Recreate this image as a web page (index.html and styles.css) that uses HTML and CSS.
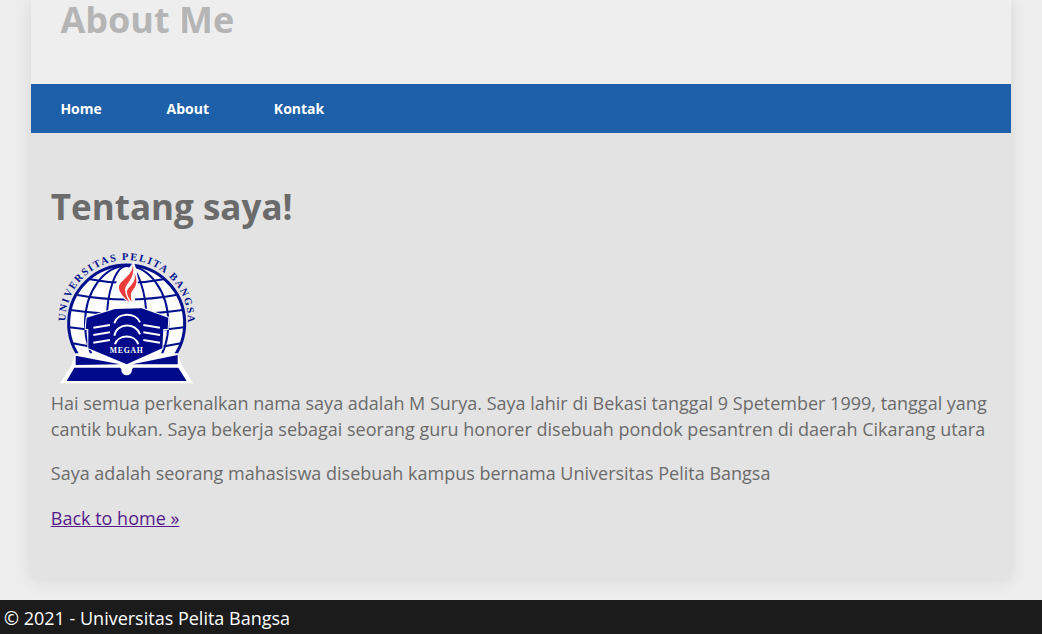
FILE: index.html
```html
<!DOCTYPE html>
<html lang="en">

    <head>
        <meta name="viewport" content="width=device-width, initial-scale=1">
        <title>About Me</title>
        <link rel="stylesheet" href="styles.css">
    </head>

    <body>
        <div class="wrapper">
            <header class="site-header">
                <h1>About Me</h1>
            </header>
            <nav class="site-nav">
                <a href="#">Home</a>
                <a href="#">About</a>
                <a href="#">Kontak</a>
            </nav>
            <main class="content">
                <h2>Tentang saya!</h2>
                <svg class="logo" viewBox="33 30 450 408" role="img" aria-label="Logo Universitas Pelita Bangsa">
                    <defs>
                        <path id="logo-arc" d="M76 244A184 184 0 0 1 444 244"></path>
                    </defs>
                    <text class="logo-ring"><textPath href="#logo-arc">UNIVERSITAS PELITA BANGSA</textPath></text>

                    <!-- globe -->
                    <circle class="globe-fill" cx="260" cy="250" r="172"></circle>
                    <g class="globe-lines">
                        <ellipse cx="260" cy="250" rx="125" ry="172"></ellipse>
                        <ellipse cx="260" cy="250" rx="60" ry="172"></ellipse>
                        <path d="M150 118Q260 140 370 118"></path>
                        <path d="M112 165Q260 192 408 165"></path>
                        <path d="M92 210Q260 235 428 210"></path>
                        <path d="M88 262Q260 285 432 262"></path>
                        <path d="M98 310Q260 345 422 310"></path>
                    </g>
                    <path class="globe-ring" d="M130 365A174 174 0 1 1 390 365"></path>

                    <!-- flame -->
                    <path class="flame-gap" d="M280 62C300 110 296 150 280 192C250 180 225 160 228 130C235 110 270 90 280 62Z"></path>
                    <path class="flame" d="M278 68C282 95 262 108 245 125C232 138 232 155 268 186C255 160 250 148 262 132C275 115 284 100 278 68Z"></path>
                    <path class="flame" d="M283 100C290 120 275 135 265 145C255 158 265 172 275 186C272 170 270 160 280 148C292 135 292 115 283 100Z"></path>

                    <!-- book under building -->
                    <path class="halo" d="M60 430L95 375L107 340L413 340L425 375L460 430Z"></path>
                    <path class="navy" d="M80 423L103 383L240 383L260 405L280 383L415 383L440 423Z"></path>
                    <path class="navy" d="M107 347L240 373L107 375Z"></path>
                    <path class="navy" d="M413 345L277 373L413 373Z"></path>
                    <circle class="page-dot" cx="260" cy="390" r="16"></circle>

                    <!-- building -->
                    <path class="navy building" d="M140 233L225 207L305 205L385 233L383 267L370 267L367 325L260 373L145 325L145 267L137 267Z"></path>
                    <g class="building-lines">
                        <path d="M223 250C232 216 288 216 300 247"></path>
                        <path d="M223 287C232 247 288 247 300 283"></path>
                        <path d="M225 313C234 282 286 282 295 313"></path>
                        <path d="M160 263L210 255"></path>
                        <path d="M160 285L210 277"></path>
                        <path d="M160 308L210 300"></path>
                        <path d="M310 255L360 263"></path>
                        <path d="M310 277L360 285"></path>
                        <path d="M310 300L360 308"></path>
                    </g>
                    <text class="logo-megah" x="260" y="340" text-anchor="middle">MEGAH</text>
                </svg>
                <p>Hai semua perkenalkan nama saya adalah M Surya. Saya lahir di Bekasi tanggal 9 Spetember 1999, tanggal yang cantik bukan. Saya bekerja sebagai seorang guru honorer disebuah pondok pesantren di daerah Cikarang utara</p>
                <p>Saya adalah seorang mahasiswa disebuah kampus bernama Universitas Pelita Bangsa</p>
                <p><a class="back-link" href="#">Back to home »</a></p>
            </main>
        </div>
        <footer class="site-footer">© 2021 - Universitas Pelita Bangsa</footer>
    </body>

</html>
```

FILE: styles.css
```css
html {
    font-family: "Open Sans", sans-serif;
}

body {
    margin: 0;
    background-color: #eee;
    color: #6b6b6b;
}

.wrapper {
    width: 980px;
    height: 580px;
    margin: 0 auto 20px;
    box-shadow: 0 0 20px rgba(0, 0, 0, 0.1);
    border-radius: 0 0 3px 3px;
    display: flex;
    flex-direction: column;
}

.site-header {
    height: 84px;
    padding-left: 29.4px;
    box-sizing: border-box;
}

.site-header h1 {
    margin: 0;
    font-size: 36px;
    line-height: 40px;
    color: #b5b5b5;
}

.site-nav {
    height: 49px;
    padding-left: 29.4px;
    background-color: #1e5faa;
    display: flex;
    align-items: center;
    gap: 64.8px;
}

.site-nav a {
    color: #fff;
    font-size: 14px;
    font-weight: 700;
    text-decoration: none;
}

.content {
    flex: 1;
    padding: 49px 19.8px 0;
    background-color: #e3e3e3;
    border-radius: 0 0 3px 3px;
}

.content h2 {
    margin: 0 0 19px;
    font-size: 35px;
    line-height: 49px;
    color: #6b6b6b;
}

.content p {
    margin: 0 0 19px;
    font-size: 18px;
    line-height: 25.7px;
}

.back-link {
    color: #551a8b;
}

.logo {
    display: block;
    width: 150px;
    height: 136px;
    margin-bottom: 5px;
    overflow: visible;
}

.logo-ring {
    font-family: "Liberation Serif", serif;
    font-size: 31px;
    font-weight: 700;
    letter-spacing: 4.8px;
    fill: #000f8c;
}

.logo-megah {
    font-family: "Liberation Serif", serif;
    font-size: 23px;
    font-weight: 700;
    letter-spacing: 2.5px;
    fill: #fff;
}

.globe-fill {
    fill: #fff;
}

.globe-lines {
    fill: none;
    stroke: #000f8c;
    stroke-width: 6;
}

.globe-ring {
    fill: none;
    stroke: #000f8c;
    stroke-width: 9;
}

.flame {
    fill: #ee3b3b;
}

.flame-gap {
    fill: #fff;
}

.navy {
    fill: #000a8a;
}

.building {
    stroke: #fff;
    stroke-width: 6;
    paint-order: stroke;
}

.halo {
    fill: #fff;
}

.page-dot {
    fill: #fff;
}

.building-lines {
    fill: none;
    stroke: #fff;
    stroke-width: 6;
}

.site-footer {
    height: 34px;
    padding-left: 4px;
    background-color: #1b1b1b;
    color: #fff;
    font-size: 18px;
    line-height: 36px;
}
```
